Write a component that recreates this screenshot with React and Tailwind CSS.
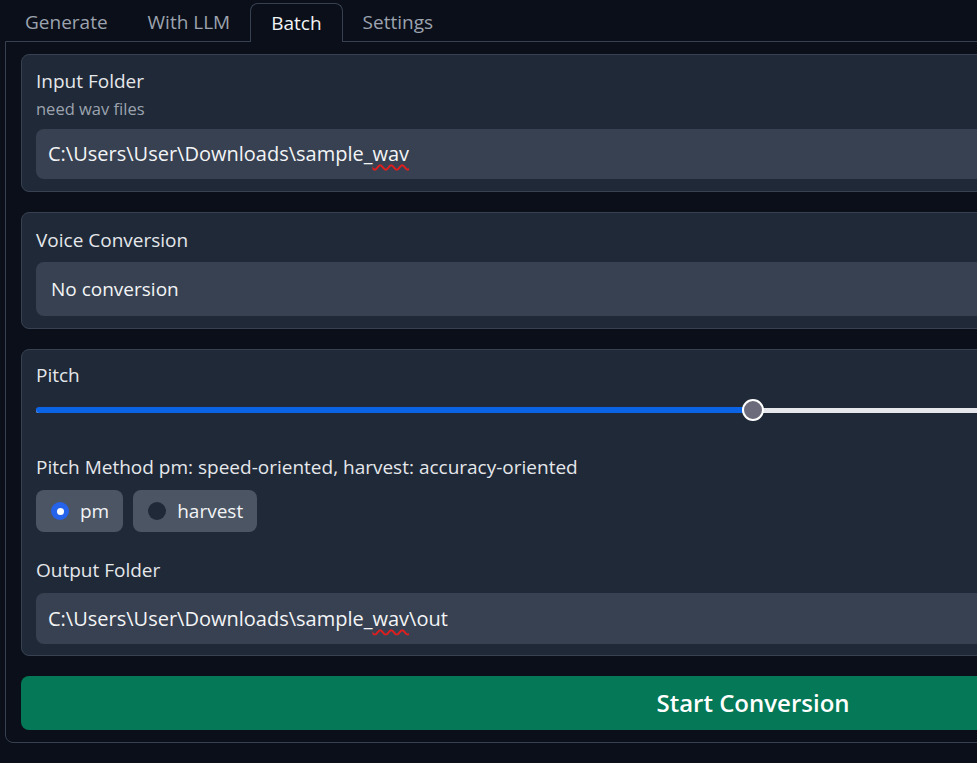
import React, { useState } from 'react';

const tabs = ['Generate', 'With LLM', 'Batch', 'Settings'];

const Panel = ({ className = '', children }) => (
  <div className={`rounded-lg border border-[#374151] bg-[#1f2937] px-[14px] ${className}`}>{children}</div>
);

const Label = ({ children }) => (
  <div className="flex h-6 items-center text-[19px] text-[#e5e7eb]">{children}</div>
);

// path with a spellcheck squiggle under "wav"
const PathText = ({ suffix = '' }) => (
  <span>
    C:\Users\User\Downloads\sample_
    <span className="underline decoration-wavy decoration-[#e11d1d] decoration-2 underline-offset-[3px]">wav</span>
    {suffix}
  </span>
);

export default function App() {
  const [method, setMethod] = useState('pm');
  const pitch = 50;

  return (
    <div className="h-screen w-screen overflow-hidden bg-[#0b0f19]" style={{ fontFamily: '"Open Sans", "Noto Sans", sans-serif' }}>
      <div className="w-[1506px] pl-[5px] pr-[5px]">
        {/* Tabs */}
        <div className="flex h-[41px] items-end">
          {tabs.map(t => (
            t === 'Batch' ? (
              <div key={t} className="relative -mb-px flex h-[39px] items-center rounded-t-lg border border-b-0 border-[#374151] bg-[#0b0f19] px-5 text-[19px] text-[#f3f4f6]">
                {t}
              </div>
            ) : (
              <div key={t} className="flex h-[38px] items-center px-[20px] text-[19px] text-[#9ca3af]">{t}</div>
            )
          ))}
        </div>

        {/* Tab content */}
        <div className="flex flex-col gap-5 rounded-b-lg border border-[#374151] px-[15px] pt-3 pb-3">
          <Panel className="pt-[14px] pb-3">
            <Label>Input Folder</Label>
            <div className="mt-[6px] flex h-5 items-center text-[16.5px] text-[#9ca3af]">need wav files</div>
            <div className="mt-[10px] flex h-[50px] items-center rounded-lg bg-[#374151] px-3 text-[20px] text-[#f3f4f6]">
              <PathText />
            </div>
          </Panel>

          <Panel className="pt-[15px] pb-3">
            <Label>Voice Conversion</Label>
            <div className="mt-[10px] flex h-[54px] items-center rounded-lg bg-[#374151] px-[15px] text-[19px] text-[#f3f4f6]">
              No conversion
            </div>
          </Panel>

          <Panel className="pt-[13px] pb-[11px]">
            <Label>Pitch</Label>
            <div className="relative flex h-[46px] items-center">
              <div className="h-[5px] w-full rounded-full bg-[#e5e7eb]" />
              <div className="absolute left-0 h-[6px] rounded-full bg-[#0b63e5]" style={{ width: `${pitch}%` }} />
              <div
                className="absolute h-[22px] w-[22px] -translate-x-1/2 rounded-full border-2 border-white bg-[#6b6b7b]"
                style={{ left: `${pitch}%` }}
              />
            </div>
            <div className="mt-[22px]">
              <Label>Pitch Method pm: speed-oriented, harvest: accuracy-oriented</Label>
            </div>
            <div className="mt-[11px] flex gap-[10px]">
              {['pm', 'harvest'].map(m => (
                <button
                  key={m}
                  onClick={() => setMethod(m)}
                  className="flex h-[42px] items-center gap-[11px] rounded-lg bg-[#4b5563] pl-[15px] pr-[14px] text-[19px] text-[#f3f4f6]"
                >
                  {method === m ? (
                    <span className="flex h-[18px] w-[18px] items-center justify-center rounded-full bg-[#2563eb]">
                      <span className="h-[7px] w-[7px] rounded-full bg-white" />
                    </span>
                  ) : (
                    <span className="h-[18px] w-[18px] rounded-full bg-[#1f2937]" />
                  )}
                  {m}
                </button>
              ))}
            </div>
            <div className="mt-[26px]">
              <Label>Output Folder</Label>
            </div>
            <div className="mt-[11px] flex h-[51px] items-center rounded-lg bg-[#374151] px-3 text-[20px] text-[#f3f4f6]">
              <PathText suffix="\out" />
            </div>
          </Panel>

          <button className="flex h-[54px] items-center justify-center rounded-lg bg-[#047857] text-[24px] font-semibold text-white">
            Start Conversion
          </button>
        </div>
      </div>
    </div>
  );
}
